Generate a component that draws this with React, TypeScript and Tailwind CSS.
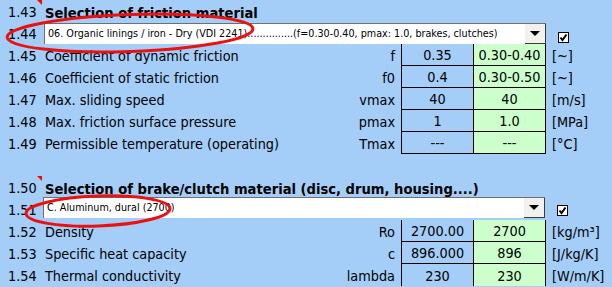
import React from "react";

const FONT = "font-['DejaVu_Sans_Condensed','DejaVu_Sans',sans-serif]";

type Row = [string, string, string, string, string, string];

const rows1: Row[] = [
  ["1.45", "Coefficient of dynamic friction", "f", "0.35", "0.30-0.40", "[~]"],
  ["1.46", "Coefficient of static friction", "f0", "0.4", "0.30-0.50", "[~]"],
  ["1.47", "Max. sliding speed", "vmax", "40", "40", "[m/s]"],
  ["1.48", "Max. friction surface pressure", "pmax", "1", "1.0", "[MPa]"],
  ["1.49", "Permissible temperature (operating)", "Tmax", "---", "---", "[°C]"],
];

const rows2: Row[] = [
  ["1.52", "Density", "Ro", "2700.00", "2700", "[kg/m³]"],
  ["1.53", "Specific heat capacity", "c", "896.000", "896", "[J/kg/K]"],
  ["1.54", "Thermal conductivity", "lambda", "230", "230", "[W/m/K]"],
];

function Num({ n, comment }: { n: string; comment?: boolean }) {
  return (
    <div className="relative w-[42px] h-full flex items-center pl-[8px] pt-[3px] shrink-0">
      {n}
      {comment && (
        <div className="absolute right-0 top-0 w-0 h-0 border-t-[5px] border-t-[#ff0000] border-l-[5px] border-l-transparent" />
      )}
    </div>
  );
}

function DataRow({ r, last }: { r: Row; last?: boolean }) {
  return (
    <div className="flex h-[22px]">
      <Num n={r[0]} />
      <div className="w-[359px] h-full flex items-center pt-[3px] pl-[3px] pr-[6px] shrink-0">
        <span className="flex-1">{r[1]}</span>
        <span>{r[2]}</span>
      </div>
      <div
        className={`w-[73px] h-full flex items-center justify-center pt-[3px] border-l border-r border-black shrink-0 ${
          last ? "" : "border-b"
        }`}
      >
        {r[3]}
      </div>
      <div
        className={`w-[72px] h-full flex items-center justify-center pt-[3px] border-r border-black bg-[#ccffcc] shrink-0 ${
          last ? "" : "border-b"
        }`}
      >
        {r[4]}
      </div>
      <div className="h-full flex items-center pl-[6px] pt-[3px] whitespace-nowrap">{r[5]}</div>
    </div>
  );
}

function Dropdown({ text, className }: { text: string; className: string }) {
  return (
    <div
      className={`relative w-[502px] h-[21px] bg-white border-t border-l border-[#6f6f6f] flex items-center shrink-0 ${className}`}
    >
      <span className="pl-[3px] pt-[1px] text-[10.7px] whitespace-pre text-black">{text}</span>
      <div className="absolute right-0 top-0 bottom-0 w-[21px] bg-[#f2f1ee] border-r border-b border-[#3c3c3c] flex items-center justify-center">
        <svg width="10" height="5" viewBox="0 0 10 5">
          <polygon points="0,0 10,0 5,5" fill="#000" />
        </svg>
      </div>
    </div>
  );
}

function CheckBox({ className }: { className: string }) {
  return (
    <div className={`w-[11px] h-[11px] bg-white border border-black flex items-center justify-center ${className}`}>
      <svg width="9" height="9" viewBox="0 0 9 9">
        <polyline points="1.5,4.5 3.5,7 7.5,1.5" fill="none" stroke="#000" strokeWidth="2" />
      </svg>
    </div>
  );
}

export default function App() {
  return (
    <div className={`relative w-[612px] h-[287px] overflow-hidden bg-[#a4cdf7] text-[14.3px] text-black ${FONT}`}>
      <div className="flex h-[22px]">
        <Num n="1.43" comment />
        <div className="h-full flex items-center pt-[3px] pl-[3px] font-bold text-[14.6px]">Selection of friction material</div>
      </div>
      <div className="flex h-[22px]">
        <Num n="1.44" />
        <Dropdown
          className="ml-[2px] mt-[1px]"
          text="06. Organic linings / iron - Dry (VDI 2241)...............(f=0.30-0.40, pmax: 1.0, brakes, clutches)"
        />
        <CheckBox className="ml-[12px] mt-[10px]" />
      </div>
      {rows1.map((r) => (
        <DataRow key={r[0]} r={r} />
      ))}
      <div className="h-[22px]" />
      <div className="flex h-[22px]">
        <Num n="1.50" comment />
        <div className="h-full flex items-center pt-[3px] pl-[3px] font-bold text-[14.6px] whitespace-nowrap">
          Selection of brake/clutch material (disc, drum, housing....)
        </div>
      </div>
      <div className="flex h-[22px]">
        <Num n="1.51" />
        <Dropdown className="ml-[1px] -mt-[1px]" text="C. Aluminum, dural (2700)" />
        <CheckBox className="ml-[12px] mt-[7px]" />
      </div>
      {rows2.map((r, i) => (
        <DataRow key={r[0]} r={r} last={i === rows2.length - 1} />
      ))}

      <svg className="absolute inset-0 pointer-events-none" width="612" height="287" viewBox="0 0 612 287">
        <ellipse cx="130" cy="33" rx="123" ry="18.5" transform="rotate(-2 130 33)" fill="none" stroke="#ec1111" strokeWidth="3" />
        <ellipse cx="98" cy="211" rx="72" ry="15" transform="rotate(-2 98 211)" fill="none" stroke="#ec1111" strokeWidth="3" />
      </svg>
    </div>
  );
}
